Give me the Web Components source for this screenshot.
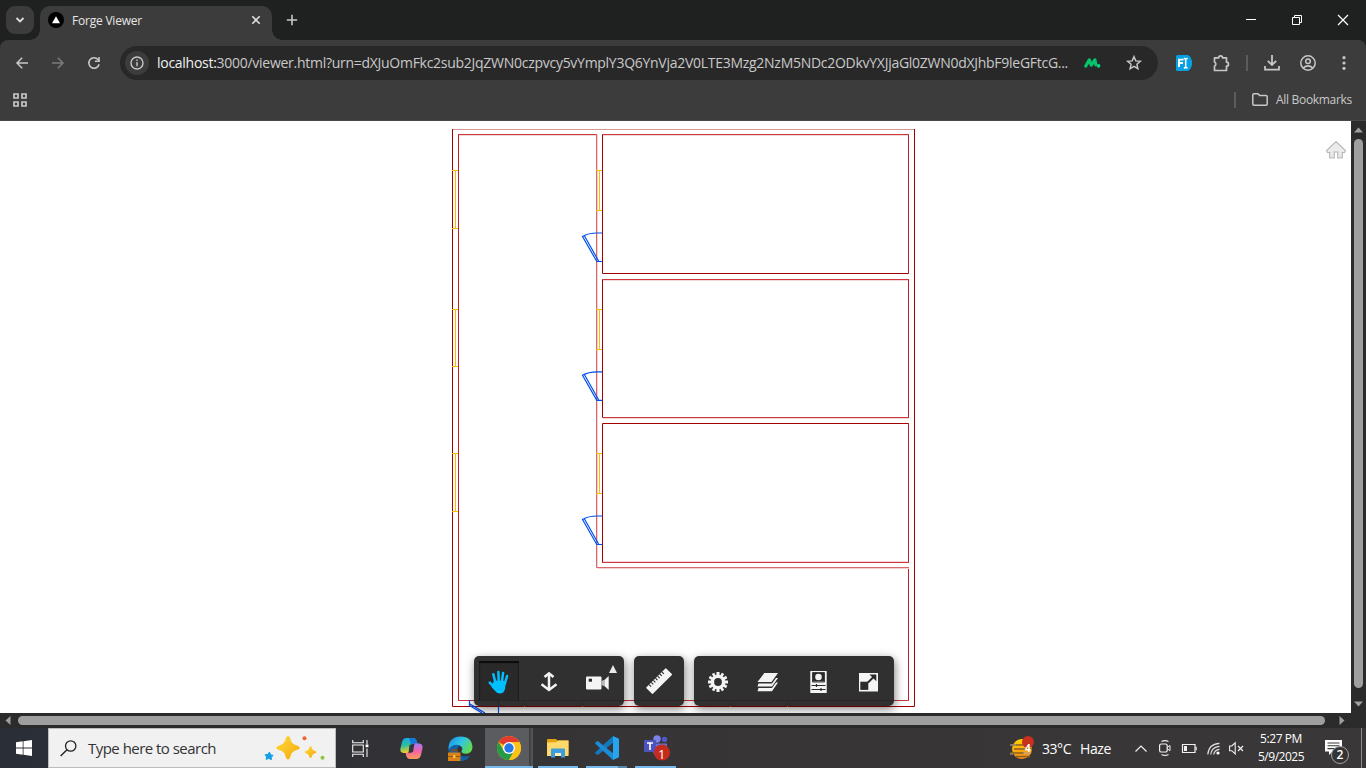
<!DOCTYPE html>
<html lang="en">
<head>
<meta charset="utf-8">
<title>Forge Viewer</title>
<style>
html,body{margin:0;height:100%;overflow:hidden;background:#1f2020}
body{font-family:"Open Sans","Noto Sans",sans-serif}
</style>
</head>
<body>
<desktop-screen></desktop-screen>
<script>
const define = (name, html, init) => customElements.define(name, class extends HTMLElement {
  constructor() {
    super();
    const t = document.createElement('template');
    t.innerHTML = html;
    this.attachShadow({mode: 'open'}).append(t.content.cloneNode(true));
  }
  connectedCallback() { if (init) init(this); }
});

/* name: [width, height, markup] */
const ICONS = {
  chevDown: [10,8,'<path d="M1.5 2l3.5 3.5L8.500 2" fill="none" stroke="#dcdcdc" stroke-width="1.8"/>'],
  favicon: [16,16,'<circle cx="8" cy="8" r="8" fill="#000"/><path d="M8 4.200l4 7H4z" fill="#fff"/>'],
  close: [10,10,'<path d="M1.300 1.300l7.400 7.400M8.700 1.300l-7.400 7.400" stroke="#dedede" stroke-width="1.6"/>'],
  plus: [12,12,'<path d="M6 .8v10.400M.8 6h10.400" stroke="#c7c7c7" stroke-width="1.6"/>'],
  min: [10,10,'<path d="M0 4.500h10" stroke="#fff"/>'],
  restore: [10,10,'<path d="M.5 2.500h7v7h-7zM2.500 2.500v-2h7v7h-2" fill="none" stroke="#fff"/>'],
  winClose: [10,10,'<path d="M0 0l10 10M10 0L0 10" stroke="#fff" stroke-width="1.2"/>'],
  back: [12,12,'<path d="M12 6H1.200M6.200 .8L1 6l5.200 5.200" fill="none" stroke="#c7c7c7" stroke-width="1.5"/>'],
  forward: [12,12,'<path d="M0 6h10.800M5.800 .8L11 6l-5.200 5.200" fill="none" stroke="#7b7b7b" stroke-width="1.500"/>'],
  reload: [14,14,'<path d="M12.100 8.200A5.200 5.200 0 1 1 11 3.600L12.200 5" fill="none" stroke="#c7c7c7" stroke-width="1.600"/><path d="M12.800 1v5H7.900V4.500h3.400V1z" fill="#c7c7c7"/>'],
  info: [14,14,'<circle cx="7" cy="7" r="6" fill="none" stroke="#c7c7c7" stroke-width="1.400"/><path d="M7 6v4.200M7 3.400v1.500" stroke="#c7c7c7" stroke-width="1.400"/>'],
  grid: [14,14,'<path d="M1 1h4v4H1zM9 1h4v4H9zM1 9h4v4H1zM9 9h4v4H9z" fill="none" stroke="#c7c7c7" stroke-width="1.700"/>'],
  emm: [16,10,'<path d="M1.800 8L5.300 1.900l2 5.300 3.600-5.300 1 5" fill="none" stroke="#05c46b" stroke-width="3.200" stroke-linecap="round" stroke-linejoin="round"/><circle cx="14.600" cy="7.900" r="1.800" fill="#05d878"/>'],
  star: [16,16,'<path d="M8 1.700l1.800 4.200 4.500.4-3.400 3 1 4.400L8 11.400l-3.900 2.300 1-4.400-3.400-3 4.500-.4z" fill="none" stroke="#c7c7c7" stroke-width="1.500"/>'],
  ext: [16,16,'<path d="M0 1.500Q0 0 1.500 0H12l2.500 2L16 6v4l-1.500 4L12 16H1.500Q0 16 0 14.500z" fill="#069fe2"/><path d="M3 12V4.600h4.500M3 8h4" stroke="#fff" stroke-width="1.900" fill="none"/><path d="M7.800 3.300l1.900.8 1.900-.8M7.800 13.200l1.900-.8 1.900.8M9.700 4v8.500" stroke="#fff" stroke-width="1.500" fill="none"/>'],
  puzzle: [17,17,'<path d="M1.500 2.800h4.200a1.900 1.900 0 0 1 3.800 0h4v4.400a2 2 0 0 1 0 4v4.300h-12v-4.300a2.400 2.400 0 0 0 0-4.300z" fill="none" stroke="#c7c7c7" stroke-width="1.700" stroke-linejoin="round"/>'],
  download: [16,16,'<path d="M8 0v9.800M3.800 5.800L8 10l4.200-4.200M1 11v3.700h14V11" fill="none" stroke="#c7c7c7" stroke-width="1.800"/>'],
  person: [16,16,'<circle cx="8" cy="8" r="7.200" fill="none" stroke="#c7c7c7" stroke-width="1.500"/><circle cx="8" cy="6.200" r="2.300" fill="none" stroke="#c7c7c7" stroke-width="1.500"/><path d="M3.200 13.100q4.800-4.500 9.600 0" fill="none" stroke="#c7c7c7" stroke-width="1.500"/>'],
  dots: [4,14,'<g fill="#c7c7c7"><circle cx="2" cy="1.700" r="1.600"/><circle cx="2" cy="7" r="1.600"/><circle cx="2" cy="12.300" r="1.600"/></g>'],
  folder: [16,13,'<path d="M.8 2Q.8.800 2 .8h4l1.600 1.700H14q1.200 0 1.200 1.200V11q0 1.200-1.200 1.200H2Q.8 12.200.8 11z" fill="none" stroke="#c7c7c7" stroke-width="1.500"/>'],
  home: [20,18,'<path d="M10 .6L.5 9.500l1 2h2.200V17h4.500v-6h3.600v6h4.500v-5.500h2.200l1-2z" fill="#ebebeb" stroke="#b4b4b4" stroke-width="1.100"/>'],
  hand: [22,24,'<g stroke="#00bfff" stroke-linecap="round" fill="none"><path d="M7.300 12L5.300 4.200M10.700 11L10.400 2M14 11l1.100-8.100M16.800 14l2.300-8" stroke-width="2.500"/><path d="M6.500 17.700L1.800 12.700" stroke-width="2.700"/></g><path d="M6 10.500l12 .5-1 8q-1.100 4.600-5.100 4.600-3.300 0-5.200-3L3.500 17z" fill="#00bfff"/>'],
  dolly: [18,20,'<path d="M9 1.500v16M4.500 5L9 1.300 13.500 5M1.500 12.300L9 18l7.500-5.700" fill="none" stroke="#f4f4f4" stroke-width="2.500"/>'],
  camera: [23,14,'<rect width="15.500" height="13" rx="1" y=".5" fill="#f4f4f4"/><path d="M2.700 2.700h3.300v3h-3.300z" fill="#2a2a2a"/><path d="M15.500 5l3.500-1.500v7L15.500 9z" fill="#bbb"/><path d="M19 3.500L22.700 0v14L19 10.500z" fill="#f4f4f4"/>'],
  ruler: [26,26,'<g transform="rotate(-45 13 13)"><rect x="-1" y="8.600" width="28" height="9.200" rx=".6" fill="#f4f4f4"/><path d="M3.500 8.600v2.800M6.500 8.600v2.800M9.500 8.600v2.800M12.500 8.600v2.800M15.500 8.600v2.800M18.500 8.600v2.800M21.500 8.600v2.800" stroke="#2b2b2b" stroke-width="1.100"/></g>'],
  gear: [20,20,'<g fill="none" stroke="#f4f4f4"><circle cx="10" cy="10" r="5.600" stroke-width="3.400"/><g stroke-width="3.100"><path d="M10 0v4M10 16v4M0 10h4M16 10h4"/></g><g stroke-width="2.700"><path d="M5 1.340l1.750 3.030M13.250 15.630L15 18.660M15 1.340l-1.750 3.030M6.750 15.630L5 18.660M1.340 5l3.030 1.750M15.630 13.250L18.660 15M18.660 5l-3.030 1.750M4.370 13.250L1.340 15"/></g></g>'],
  layers: [22,19,'<g fill="#f4f4f4"><path d="M7.300 0H21l-6.500 9H.5z"/><path d="M1.500 10.500H15l4-5.500h2l-6 8.500H.5zM1.500 15H15l4-5.500h2L15 18.200H.5z"/></g>'],
  model: [17,22,'<rect width="17" height="22" fill="#f4f4f4"/><path d="M.5 0v22M16.500 0v22" stroke="#bdbdbd"/><circle cx="8.500" cy="6" r="3.700" fill="#2a2a2a"/><path d="M2.500 1.500h12v9.500h-12z" fill="none" stroke="#2a2a2a" stroke-width=".9"/><path d="M3 2h11v8.500H3z" fill="#2a2a2a"/><circle cx="8.500" cy="6" r="3.300" fill="#f4f4f4"/><path d="M1.500 14.500h14M1.500 18.500h14M6.500 13v3M11 17v3" stroke="#2a2a2a" stroke-width="1.200"/>'],
  full: [19,19,'<rect width="19" height="18.500" fill="#f4f4f4"/><path d="M1.300 8.700h8v8.200h-8z" fill="#2a2a2a"/><path d="M9 9.500L15.500 3" stroke="#2a2a2a" stroke-width="2"/><path d="M10.500 1.500h6.800v6.800z" fill="#2a2a2a"/>'],
  win: [16,16,'<path d="M0 2.300L6.700 1.300v6.300H0zM7.500 1.200L16 0v7.600H7.500zM0 8.400h6.700v6.300L0 13.700zM7.500 8.400H16V16l-8.500-1.200z" fill="#fff"/>'],
  search: [17,17,'<circle cx="10.700" cy="6" r="5.200" fill="none" stroke="#222" stroke-width="1.300"/><path d="M7 9.700L.6 16" stroke="#222" stroke-width="1.400"/>'],
  sparkle: [61,24,'<defs><linearGradient id="y" x2="1" y2="1"><stop stop-color="#ffdc3c"/><stop offset="1" stop-color="#f5a70a"/></linearGradient></defs><path d="M24 0q1.600 0 2.600 3.600 1.200 4.500 5.400 5.600 3.700 1 3.700 2.600T32 14.300q-4.200 1.100-5.400 5.600-1 3.500-2.600 3.500t-2.600-3.500q-1.200-4.500-5.400-5.600-3.700-.9-3.700-2.500T16 9.200q4.200-1.100 5.400-5.600Q22.400 0 24 0z" fill="url(#y)"/><path d="M46.500 10q1 0 1.700 3 .6 1.300 2.300 1.700 2 .6 2 1.400t-2 1.300q-1.700.5-2.300 2-.7 2.600-1.700 2.600t-1.600-2.500q-.7-1.600-2.400-2.100-2-.5-2-1.300t2-1.400q1.700-.4 2.400-1.700.6-3 1.600-3z" fill="url(#y)"/><path d="M5.500 16l1 2.800 2.700.6-2 1.800.2 2.500-2.600-1.300-2.600 1 .4-2.600-1.600-2 2.900-.4z" fill="#13a0e5" stroke="#13a0e5" stroke-linejoin="round"/><circle cx="40.500" cy="2.300" r="2" fill="#f0632c"/><circle cx="58.500" cy="21.700" r="2" fill="#8cc63e"/>'],
  taskview: [17,17,'<path d="M.7 0v2.700h10.600V0M.7 17v-2.700h10.600V17M.7 5h10.600v7H.7zM15 0v4.200M15 8.600V17" fill="none" stroke="#f2f2f2" stroke-width="1.100"/><path d="M13.600 4.500h2.800v2.700h-2.800z" fill="#fff"/>'],
  copilot: [23,21,'<defs><linearGradient id="a" x2=".2" y2="1"><stop stop-color="#19a7f0"/><stop offset=".5" stop-color="#27bda0"/><stop offset="1" stop-color="#f4cf24"/></linearGradient><linearGradient id="b" x2="0" y2="1"><stop stop-color="#a778f4"/><stop offset=".5" stop-color="#f263a5"/><stop offset="1" stop-color="#fb9d58"/></linearGradient></defs><path d="M6.500 0H13q3 0 4 4l.5 2-4.700 1-1.500 6-1.200 2H3.500Q-.3 14.700.4 10.500L2 4Q3.200 0 6.500 0z" fill="url(#a)"/><path d="M13 0q3 0 4 4l.5 1.700-6 2L9 0z" fill="#1678dd"/><path d="M16.500 21H10q-3 0-4-4l-.4-2L10 14l2-6 1-2.500h6.500Q23 6 22.500 10L21 17q-1.200 4-4.500 4z" fill="url(#b)"/><path d="M9.500 7l5-1.500L13 14l-4.500 1.300z" fill="#35343a"/>'],
  edge: [25,25,'<defs><linearGradient id="a" x2="1" y2=".5"><stop stop-color="#168de2"/><stop offset=".55" stop-color="#2fc4e6"/><stop offset="1" stop-color="#60d957"/></linearGradient></defs><path d="M.5 14Q-.2 1 12.500.5 24 .5 24.500 11.500 24 17.300 18 17.700q-5 0-4.500-2.400Q15.500 12 12.500 10 6 7 .5 14z" fill="url(#a)"/><path d="M.5 14Q5 6.500 12 9.500 7.500 12 10 17q4 5.500 12 2.500Q19 25 12.500 25 1.500 24 .5 14z" fill="#1260a8"/><path d="M0 16.500h12.500V25H0z" fill="#d98317"/><path d="M4 16v-2h5v2" fill="none" stroke="#8b4d10" stroke-width="1.300"/><path d="M0 20.500h12.500" stroke="#9b570d"/><path d="M5.300 19.300h2v2.500h-2z" fill="#ffe172"/>'],
  chrome: [24,24,'<circle cx="12" cy="12" r="12" fill="#fbc116"/><path d="M12 12L1.600 6A12 12 0 0 1 22.400 6z" fill="#e33b2e"/><path d="M1.600 6A12 12 0 0 0 12 24l5.200-9L12 12 6.800 15z" fill="#259b48"/><path d="M12 6h10.400a12 12 0 0 1-10.400 18l5.200-9z" fill="#fbc116"/><circle cx="12" cy="12" r="6" fill="#fff"/><circle cx="12" cy="12" r="4.700" fill="#2877ea"/>'],
  explorer: [22,19,'<path d="M0 1Q0 0 1 0h8l1.500 1.500H21.500v14H0z" fill="#e6a20c"/><path d="M0 3.500l9.500-.2L11 1.500h10.500V17H0z" fill="#ffda6b"/><path d="M4 18.500V10.500q0-1 1-1h12q1 0 1 1v8h-4V14H8v4.500z" fill="#3d9de0"/><path d="M8 14h6v3H8z" fill="#fff1b2"/>'],
  vscode: [24,24,'<path d="M18 0l6 2.800v18.400L18 24z" fill="#28a4ee"/><path d="M18 0v6.800L3 19 .3 17.700v-1.500z" fill="#1478bf"/><path d="M2.800 5L.3 6.300v1.400L18 24v-6.800z" fill="#1b8cd5"/>'],
  teams: [27,26,'<circle cx="13" cy="4" r="3.700" fill="#7b83eb"/><circle cx="20.500" cy="4.500" r="2.700" fill="#5059c9"/><path d="M9 8.500h14v6q0 8-7 8t-7-8z" fill="#6870d8"/><rect y="5" width="12" height="12" rx="1" fill="#4b53bc"/><path d="M3 8h6M6 8v7" stroke="#fff" stroke-width="1.600"/><circle cx="18" cy="17.500" r="8" fill="#c42b1c"/>'],
  haze: [24,24,'<defs><linearGradient id="a" x2="0" y2="1"><stop stop-color="#ffd400"/><stop offset="1" stop-color="#f68a1e"/></linearGradient></defs><circle cx="12" cy="13" r="10" fill="url(#a)"/><path d="M1 9h13M4 13h18M0 17h14M6 20.500h14" stroke="#88601f" stroke-width="1.400"/><path d="M0 9h6M13 17h8M0 18h3" stroke="#aaa3a0" stroke-width="1.200"/><circle cx="18" cy="6" r="6" fill="#c9301e"/>'],
  chevUp: [12,7,'<path d="M.5 6.500L6 1l5.500 5.500" fill="none" stroke="#f2f2f2" stroke-width="1.200"/>'],
  meet: [12,16,'<path d="M2.500 1.500Q6-.3 9.500 1.500M2.500 14.500Q6 16.300 9.500 14.500" fill="none" stroke="#f2f2f2" stroke-width="1.100"/><rect x=".6" y="4" width="7.600" height="8" rx="1.600" fill="none" stroke="#f2f2f2" stroke-width="1.200"/><path d="M8.500 7.300L11 5.500v5.200L8.500 9" fill="none" stroke="#f2f2f2"/>'],
  battery: [15,9,'<path d="M.5.500h12.500v8H.5z" fill="none" stroke="#f2f2f2" stroke-width="1.200"/><path d="M2 2h3v5H2z" fill="#f2f2f2"/><path d="M13.500 2.700h1.200v3.500h-1.200z" fill="#f2f2f2"/>'],
  wifi: [13,13,'<g fill="none" stroke="#e0e0e0" stroke-width="1.200"><path d="M.8 12.500Q1.500 2 12.500 1.300"/><path d="M3.800 12.500Q4.500 5 12.500 4.300"/><path d="M6.800 12.500Q7.300 7.800 12.500 7.300"/></g><circle cx="11" cy="11" r="1.600" fill="#fff"/>'],
  mute: [15,13,'<path d="M.6 4v4.700h2.200l3.400 3.200V.8L2.800 4z" fill="none" stroke="#f2f2f2" stroke-width="1.100"/><path d="M9 4l5 5M14 4L9 9" stroke="#f2f2f2" stroke-width="1.200"/>'],
  note: [17,15,'<path d="M0 0h17v11.500H7.500L4 15v-3.500H0z" fill="#fff"/><path d="M2.500 3h12M2.500 5.800h12M2.500 8.600h8" stroke="#3a3838" stroke-width="1.100"/>'],
  up: [9,6,'<path d="M0 5.500L4.500.5 9 5.500z" fill="#9f9f9f"/>'],
  down: [9,6,'<path d="M0 .5h9L4.500 5.500z" fill="#9f9f9f"/>'],
  left: [6,9,'<path d="M5.500 0v9L.5 4.500z" fill="#9f9f9f"/>'],
  right: [6,9,'<path d="M.5 0v9l5-4.500z" fill="#9f9f9f"/>'],
};

define('ui-icon', '<style>:host{display:block;flex:none}svg{display:block;overflow:visible}</style><div></div>', el => {
  const [w, h, body] = ICONS[el.getAttribute('name')];
  el.shadowRoot.querySelector('div').innerHTML = `<svg width="${w}" height="${h}" viewBox="0 0 ${w} ${h}">${body}</svg>`;
});

/* A single line of text tracked to a given measure. */
define('fit-text', '<style>:host{display:inline-block;white-space:nowrap;flex:none}</style><span><slot></slot></span>', el => {
  const want = +el.getAttribute('w');
  const span = el.shadowRoot.querySelector('span');
  el.style.letterSpacing = '0';
  const n = el.textContent.length;
  el.style.letterSpacing = ((want - span.getBoundingClientRect().width) / n) + 'px';
  el.style.width = want + 'px';
});

/* Fixed-width cell that centres what it holds. */
define('icon-cell', '<style>:host{display:flex;align-items:center;justify-content:center;flex:none;position:relative}</style><slot></slot>', el => {
  el.style.width = el.getAttribute('w') + 'px';
});

define('tab-strip', `<style>
:host{display:flex;height:40px;background:#1f2120;align-items:center}
.list{width:28px;height:28px;border-radius:9px;background:#3c3c3c;margin-left:6px;display:flex;align-items:center;justify-content:center}
.tab{position:relative;width:232px;height:34px;margin:6px 0 0 6px;border-radius:10px 10px 0 0;background:#3c3c3c;display:flex;align-items:center;box-sizing:border-box;padding:0 11px 6px 8px;font-size:12px;color:#e6e6e6}
.tab:before,.tab:after{content:"";position:absolute;bottom:0;width:10px;height:10px}
.tab:before{left:-10px;background:radial-gradient(circle at 0 0,transparent 9.500px,#3c3c3c 10px)}
.tab:after{right:-10px;background:radial-gradient(circle at 100% 0,transparent 9.500px,#3c3c3c 10px)}
fit-text{margin:1px 0 0 8px;flex:1}
.win{margin-left:auto;display:flex;height:40px}
.plus{margin-left:14px}
</style><div class="list"><ui-icon name="chevDown"></ui-icon></div>
<div class="tab"><ui-icon name="favicon"></ui-icon><fit-text w="70">Forge Viewer</fit-text><ui-icon name="close" style="margin-left:auto"></ui-icon></div>
<ui-icon class="plus" name="plus"></ui-icon>
<div class="win"><icon-cell w="46"><ui-icon name="min"></ui-icon></icon-cell><icon-cell w="46"><ui-icon name="restore"></ui-icon></icon-cell><icon-cell w="46"><ui-icon name="winClose"></ui-icon></icon-cell></div>`);

define('address-bar', `<style>
:host{display:flex;height:46px;align-items:center;background:#3c3c3c;padding-left:4px;border-radius:8px 8px 0 0}
.omni{width:1038px;height:34px;border-radius:17px;background:#282828;margin-left:8px;display:flex;align-items:center;box-sizing:border-box;padding-left:5px;font-size:14px;color:#c9c9c9;flex:none}
.omni fit-text{margin-bottom:2px}
.info{width:24px;height:24px;border-radius:50%;background:#3c3c3c;display:flex;align-items:center;justify-content:center;margin-right:8px}
b{font-weight:400;color:#f0f0f0}
.sep{width:2px;height:16px;background:#5c5c5c}
</style>
<icon-cell w="36"><ui-icon name="back"></ui-icon></icon-cell><icon-cell w="36"><ui-icon name="forward"></ui-icon></icon-cell><icon-cell w="36"><ui-icon name="reload"></ui-icon></icon-cell>
<div class="omni"><div class="info"><ui-icon name="info"></ui-icon></div><fit-text w="911"><b>localhost:</b>3000/viewer.html?urn=dXJuOmFkc2sub2JqZWN0czpvcy5vYmplY3Q6YnVja2V0LTE3Mzg2NzM5NDc2ODkvYXJjaGl0ZWN0dXJhbF9leGFtcG...</fit-text>
<icon-cell w="48"><ui-icon name="emm"></ui-icon></icon-cell><icon-cell w="36"><ui-icon name="star"></ui-icon></icon-cell></div>
<icon-cell w="52"><ui-icon name="ext"></ui-icon></icon-cell><icon-cell w="24"><ui-icon name="puzzle" style="margin-right:2px"></ui-icon></icon-cell><icon-cell w="26"><div class="sep"></div></icon-cell><icon-cell w="24"><ui-icon name="download"></ui-icon></icon-cell><icon-cell w="48"><ui-icon name="person"></ui-icon></icon-cell><icon-cell w="24"><ui-icon name="dots"></ui-icon></icon-cell>`);

define('bookmark-bar', `<style>
:host{display:flex;height:35px;align-items:center;background:#3c3c3c;padding:0 14px 7px 13px;box-sizing:border-box;border-bottom:1px solid #484848;color:#c9c9c9;font-size:12px}
.sep{width:2px;height:16px;background:#5c5c5c;margin:0 16px 0 auto}fit-text{margin-left:8px}
</style><ui-icon name="grid"></ui-icon><div class="sep"></div><ui-icon name="folder"></ui-icon><fit-text w="76">All Bookmarks</fit-text>`);

const door = y => `<path d="M602 ${y}H597.500Q588 ${y} 582.500 ${y+3.500}L596.800 ${y+28.500}H602M584.500 ${y+3}L598.600 ${y+28}"/>`;
const win = (x, a, b) => `<path d="M${x-3} ${a}.500h6M${x+.500} ${a}V${b}M${x-3} ${b}.500h6"/>`;
define('floor-plan', `<style>:host{display:block}svg{display:block}</style>
<svg width="463" height="592" viewBox="452 121 463 592" fill="none">
<path d="M452 129.500h462" stroke="#d79696"/>
<g stroke="#a20000"><path d="M452.500 129V706.500H914.500V129"/><path d="M602.500 134v139.500H909M602.500 279V418M602.500 562V423.500H909"/></g>
<g stroke="#bd2029"><path d="M458.500 134V701M908.500 134V274M908.500 279V418M908.500 423V563M908.500 568V701"/><path d="M458 134.500H597M602 134.500H909M602 279.500H909M602 417.500H909M602 562.500H909M458 700.500H909" stroke="#cb373d"/></g>
<g stroke="#f2d8d8"><path d="M459 135.500H596M603 135.500H908M603 280.500H908M603 418.500H909M603 561.500H908"/></g>
<path d="M597.500 134V568.500H909" stroke="#f3cfd0"/><path d="M596.500 134V567.500H909" stroke="#d9686c"/>
<g stroke="#ffbd00">${win(455,170,228)}${win(455,309,366)}${win(455,453,511)}${win(599,170,210)}${win(599,309,349)}${win(599,453,493)}</g>
<path d="M524.500 701v6M582.500 701v6M730.500 701v6M787.500 701v6" stroke="#d28a00"/>
<g stroke="#0050ee" stroke-width="1.200">${door(233)}${door(371.8)}${door(516)}
<path d="M498.500 700V713M469.500 700v5.500L482 713M470 704l15 9"/></g>
</svg>`);

define('tool-group', `<style>:host{display:flex;height:50px;border-radius:5px;background:rgba(37,37,37,.95);box-shadow:1px 3px 10px rgba(0,0,0,.5)}</style><slot></slot>`);

define('viewer-toolbar', `<style>:host{display:flex;gap:10px}
.on{width:40px;height:40px;box-sizing:border-box;background:#292929;box-shadow:inset 0 2px 1px #0b0b0b,inset 1px 0 1px #202020,inset -1px 0 1px #202020;display:flex;align-items:center;justify-content:center}
.tri{position:absolute;right:7px;top:9px;border:4px solid transparent;border-top:0;border-bottom:8px solid #e9e9e9}
</style>
<tool-group><icon-cell w="50"><div class="on"><ui-icon name="hand" style="margin:1px 1px 0 0"></ui-icon></div></icon-cell><icon-cell w="50"><ui-icon name="dolly" style="margin:2px 1px 0 0"></ui-icon></icon-cell><icon-cell w="50"><ui-icon name="camera" style="margin:3px 3px 0 0"></ui-icon><i class="tri"></i></icon-cell></tool-group>
<tool-group><icon-cell w="50"><ui-icon name="ruler"></ui-icon></icon-cell></tool-group>
<tool-group><icon-cell w="48"><ui-icon name="gear" style="margin-top:2px"></ui-icon></icon-cell><icon-cell w="52"><ui-icon name="layers" style="margin-top:2px"></ui-icon></icon-cell><icon-cell w="49"><ui-icon name="model" style="margin-top:2px"></ui-icon></icon-cell><icon-cell w="51"><ui-icon name="full" style="margin-top:2px"></ui-icon></icon-cell></tool-group>`);

define('page-view', `<style>
:host{display:grid;grid-template:592px 15px/1351px 15px;background:#2b2b2b}
.view{position:relative;background:#fff;overflow:hidden;display:flex;justify-content:center}
floor-plan{margin-left:16px}
viewer-toolbar{position:absolute;left:474px;top:535px}
.home{position:absolute;left:1326px;top:20px}
.v{display:flex;flex-direction:column;align-items:center;padding:6px 0}
.v i{width:9px;height:549px;border-radius:5px;background:#9f9f9f;margin:6px 0 auto}
.h{display:flex;align-items:center;padding:0 6px 0 5px}
.h i{height:9px;width:1307px;border-radius:5px;background:#9f9f9f;margin:0 auto 0 7px}
</style><div class="view"><floor-plan></floor-plan><ui-icon class="home" name="home"></ui-icon><viewer-toolbar></viewer-toolbar></div>
<div class="v"><ui-icon name="up"></ui-icon><i></i><ui-icon name="down"></ui-icon></div>
<div class="h"><ui-icon name="left"></ui-icon><i></i><ui-icon name="right"></ui-icon></div>`);

define('task-bar', `<style>
:host{display:flex;height:40px;background:linear-gradient(90deg,#2a2f37 0,#303136 330px,#363435 600px,#393737 1366px);color:#fff;align-items:stretch;font-size:12px}
.search{width:288px;box-sizing:border-box;border:1px solid #bcbcbc;background:#f1f1f1;display:flex;align-items:center;padding:0 10px 0 11px;color:#333;font-size:15px}
.search fit-text{margin-left:11px}.search .sp{margin-left:auto}
.run:after{content:"";position:absolute;left:3px;right:4px;bottom:0;height:2px;background:#76b9ed}
.code:after{background:linear-gradient(90deg,#76b9ed 78%,#5786ab 78%)}
.act{background:linear-gradient(90deg,#5b5c60 44px,#424246 44px,#424246 46px,#525357 46px)}
.act:after{left:0;right:0}
.badge{position:absolute;color:#fff;line-height:12px}
.weather{margin-left:auto;display:flex;align-items:center;font-size:14px}
.clock{width:62px;margin-left:2px;text-align:center;line-height:18px;padding-top:2px}
.clock fit-text{display:block;margin:auto}
.cnt{position:absolute;left:17px;top:18px;width:16px;height:16px;border:1px solid #a3a3a3;border-radius:50%;background:#353434;font-size:12px;line-height:16px;text-align:center;font-weight:600}
.end{width:1px;background:#8b8b8b;margin-right:4px}
</style>
<icon-cell w="48"><ui-icon name="win"></ui-icon></icon-cell>
<div class="search"><ui-icon name="search"></ui-icon><fit-text w="128">Type here to search</fit-text><ui-icon class="sp" name="sparkle"></ui-icon></div>
<icon-cell w="48"><ui-icon name="taskview"></ui-icon></icon-cell>
<icon-cell w="53"><ui-icon name="copilot" style="margin-left:1px"></ui-icon></icon-cell>
<icon-cell w="48"><ui-icon name="edge" style="margin-right:2px"></ui-icon></icon-cell>
<icon-cell w="48" class="run act"><ui-icon name="chrome"></ui-icon></icon-cell>
<icon-cell w="47" class="run" style="margin-left:2px"><ui-icon name="explorer" style="margin-right:2px"></ui-icon></icon-cell>
<icon-cell w="48" class="run code" style="margin-left:1px"><ui-icon name="vscode" style="margin-right:1px"></ui-icon></icon-cell>
<icon-cell w="48" class="run" style="margin-left:1px"><ui-icon name="teams" style="margin-left:2px"></ui-icon><span class="badge" style="left:26px;top:20px;font-size:13px">1</span></icon-cell>
<div class="weather"><icon-cell w="24"><ui-icon name="haze"></ui-icon><span class="badge" style="left:15px;top:7px;font-size:10px;font-weight:700;line-height:10px">4</span></icon-cell>
<fit-text w="29" style="margin-left:8px">33°C</fit-text><fit-text w="31" style="margin:0 18px 0 9px">Haze</fit-text></div>
<icon-cell w="24"><ui-icon name="chevUp"></ui-icon></icon-cell><icon-cell w="24"><ui-icon name="meet"></ui-icon></icon-cell><icon-cell w="25"><ui-icon name="battery"></ui-icon></icon-cell><icon-cell w="24"><ui-icon name="wifi" style="margin-right:1px"></ui-icon></icon-cell><icon-cell w="22"><ui-icon name="mute" style="margin-right:1px"></ui-icon></icon-cell>
<div class="clock"><fit-text w="42">5:27 PM</fit-text><fit-text w="46">5/9/2025</fit-text></div>
<icon-cell w="49"><ui-icon name="note" style="margin-right:7px;margin-bottom:2px"></ui-icon><span class="cnt" style="left:19px">2</span></icon-cell>
<div class="end"></div>`);

define('desktop-screen', `<style>:host{display:flex;flex-direction:column;width:1366px;height:768px;overflow:hidden;background:#1f2120}</style>
<tab-strip></tab-strip><address-bar></address-bar><bookmark-bar></bookmark-bar><page-view></page-view><task-bar></task-bar>`);
</script>
</body>
</html>
